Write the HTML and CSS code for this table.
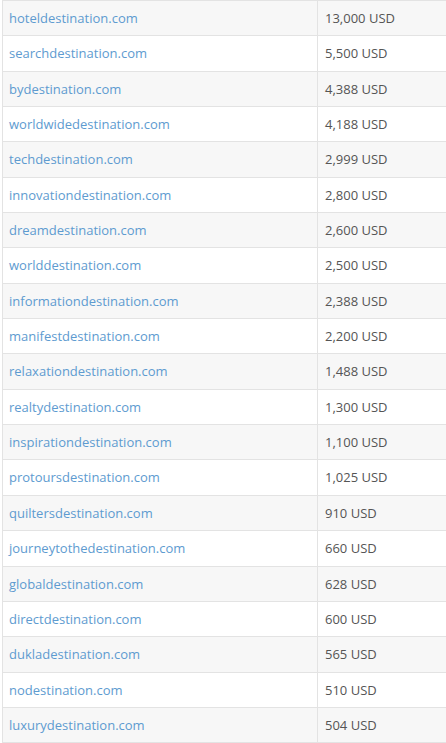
FILE: index.html
```html
<!DOCTYPE html>
<html>
<head>
<meta charset="utf-8">
<link rel="stylesheet" href="styles.css">
</head>
<body>
<div class="wrap">
<table class="domains">
<tbody>
<tr><td class="name"><a href="#">hoteldestination.com</a></td><td class="price">13,000 USD</td></tr>
<tr><td class="name"><a href="#">searchdestination.com</a></td><td class="price">5,500 USD</td></tr>
<tr><td class="name"><a href="#">bydestination.com</a></td><td class="price">4,388 USD</td></tr>
<tr><td class="name"><a href="#">worldwidedestination.com</a></td><td class="price">4,188 USD</td></tr>
<tr><td class="name"><a href="#">techdestination.com</a></td><td class="price">2,999 USD</td></tr>
<tr><td class="name"><a href="#">innovationdestination.com</a></td><td class="price">2,800 USD</td></tr>
<tr><td class="name"><a href="#">dreamdestination.com</a></td><td class="price">2,600 USD</td></tr>
<tr><td class="name"><a href="#">worlddestination.com</a></td><td class="price">2,500 USD</td></tr>
<tr><td class="name"><a href="#">informationdestination.com</a></td><td class="price">2,388 USD</td></tr>
<tr><td class="name"><a href="#">manifestdestination.com</a></td><td class="price">2,200 USD</td></tr>
<tr><td class="name"><a href="#">relaxationdestination.com</a></td><td class="price">1,488 USD</td></tr>
<tr><td class="name"><a href="#">realtydestination.com</a></td><td class="price">1,300 USD</td></tr>
<tr><td class="name"><a href="#">inspirationdestination.com</a></td><td class="price">1,100 USD</td></tr>
<tr><td class="name"><a href="#">protoursdestination.com</a></td><td class="price">1,025 USD</td></tr>
<tr><td class="name"><a href="#">quiltersdestination.com</a></td><td class="price">910 USD</td></tr>
<tr><td class="name"><a href="#">journeytothedestination.com</a></td><td class="price">660 USD</td></tr>
<tr><td class="name"><a href="#">globaldestination.com</a></td><td class="price">628 USD</td></tr>
<tr><td class="name"><a href="#">directdestination.com</a></td><td class="price">600 USD</td></tr>
<tr><td class="name"><a href="#">dukladestination.com</a></td><td class="price">565 USD</td></tr>
<tr><td class="name"><a href="#">nodestination.com</a></td><td class="price">510 USD</td></tr>
<tr><td class="name"><a href="#">luxurydestination.com</a></td><td class="price">504 USD</td></tr>
</tbody>
</table>
</div>
</body>
</html>
```
FILE: styles.css
```css
html, body {
  margin: 0;
  padding: 0;
  background: #ffffff;
  overflow: hidden;
}
.wrap {
  padding-left: 2px;
  width: 460px;
}
.domains {
  border-collapse: collapse;
  width: 100%;
  font-family: "Open Sans", "Liberation Sans", sans-serif;
  font-size: 13px;
  color: #555555;
}
.domains td {
  border: 1px solid #e3e3e3;
  padding: 8px 7px;
  line-height: 18.35px;
  height: 18.35px;
  vertical-align: middle;
}
.domains td.name {
  padding-left: 6px;
  width: 301px;
}
.domains tr:nth-child(odd) td {
  background: #f7f7f7;
}
.domains a {
  color: #5e9bd0;
  text-decoration: none;
}
```
